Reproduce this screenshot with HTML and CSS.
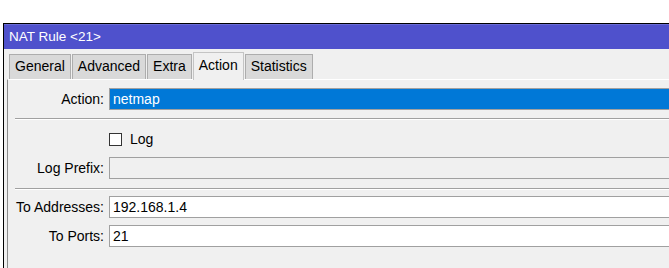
FILE: index.html
```html
<!DOCTYPE html>
<html lang="en">
<head>
    <meta charset="UTF-8">
    <title>NAT Rule &lt;21&gt;</title>
    <link rel="stylesheet" href="styles.css">
</head>
<body>

<div class="window">
    <div class="titlebar">NAT Rule &lt;21&gt;</div>

    <div class="tabs">
        <span class="tab">General</span>
        <span class="tab">Advanced</span>
        <span class="tab">Extra</span>
        <span class="tab active">Action</span>
        <span class="tab">Statistics</span>
    </div>

    <div class="panel">
        <div class="row row-action">
            <label>Action:</label>
            <div class="field selected">netmap</div>
        </div>

        <div class="sep"></div>

        <div class="row row-check">
            <span class="checkbox"></span>
            <span class="check-label">Log</span>
        </div>

        <div class="row row-prefix">
            <label>Log Prefix:</label>
            <div class="field disabled"></div>
        </div>

        <div class="sep sep-2"></div>

        <div class="row row-addr">
            <label>To Addresses:</label>
            <div class="field">192.168.1.4</div>
        </div>

        <div class="row row-ports">
            <label>To Ports:</label>
            <div class="field">21</div>
        </div>
    </div>
</div>

</body>
</html>
```

FILE: styles.css
```css
* {
    margin: 0;
    padding: 0;
    box-sizing: border-box;
}

body {
    background-color: #fff;
    font-family: 'Liberation Sans', Arial, sans-serif;
    font-size: 13px;
    color: #000;
    overflow: hidden;
    width: 669px;
    height: 268px;
}

/* Dialog window, cut off on the right */
.window {
    margin-top: 23px;
    margin-left: 3px;
    width: 666px;
    height: 245px;
    border-top: 1px solid #000;
    border-left: 1px solid #000;
    background-color: #f0f0f0;
    overflow: hidden;
}

.titlebar {
    height: 25px;
    line-height: 24px;
    padding-left: 5px;
    background-color: #4f51cc;
    border-top: 1px solid #6a6cd6;
    color: #fff;
    font-size: 13.5px;
}

/* Tab strip */
.tabs {
    display: flex;
    align-items: flex-end;
    height: 30px;
    padding-left: 5px;
}

.tab {
    height: 25px;
    line-height: 23px;
    padding: 0 5px;
    margin-right: 1px;
    background-color: #d9d9d9;
    border: 1px solid #adadad;
    border-bottom: none;
    font-size: 14px;
}

.tab.active {
    height: 28px;
    line-height: 24px;
    background-color: #f0f0f0;
    border-color: #c4c4c4;
    position: relative;
    top: 1px;
}

/* Tab page */
.panel {
    margin-left: 3px;
    height: 200px;
    border-top: 1px solid #fff;
    border-left: 1px solid #8a8a8a;
    padding-top: 8px;
}

.row {
    display: flex;
    align-items: center;
    height: 22px;
}

.row label {
    width: 96px;
    margin-right: 5px;
    text-align: right;
    font-size: 14px;
}

/* fields run on past the right edge of the shot */
.field {
    flex: 1;
    height: 22px;
    line-height: 20px;
    padding-left: 3px;
    background-color: #fff;
    border: 1px solid #a0a0a0;
    border-right: none;
    font-size: 14px;
}

.field.selected {
    background-color: #0078d7;
    color: #fff;
}

.field.disabled {
    background-color: #f0f0f0;
}

.sep {
    margin: 8px 0 0 7px;
    height: 2px;
    border-top: 1px solid #a0a0a0;
    border-bottom: 1px solid #fff;
}

.sep-2 {
    margin-top: 9px;
}

.row-check {
    margin-top: 8px;
    padding-left: 101px;
}

.checkbox {
    width: 13px;
    height: 13px;
    background-color: #fff;
    border: 1px solid #333;
}

.check-label {
    margin-left: 8px;
    font-size: 14px;
}

.row-prefix {
    margin-top: 7px;
}

.row-addr {
    margin-top: 6px;
}

.row-ports {
    margin-top: 7px;
}
```
